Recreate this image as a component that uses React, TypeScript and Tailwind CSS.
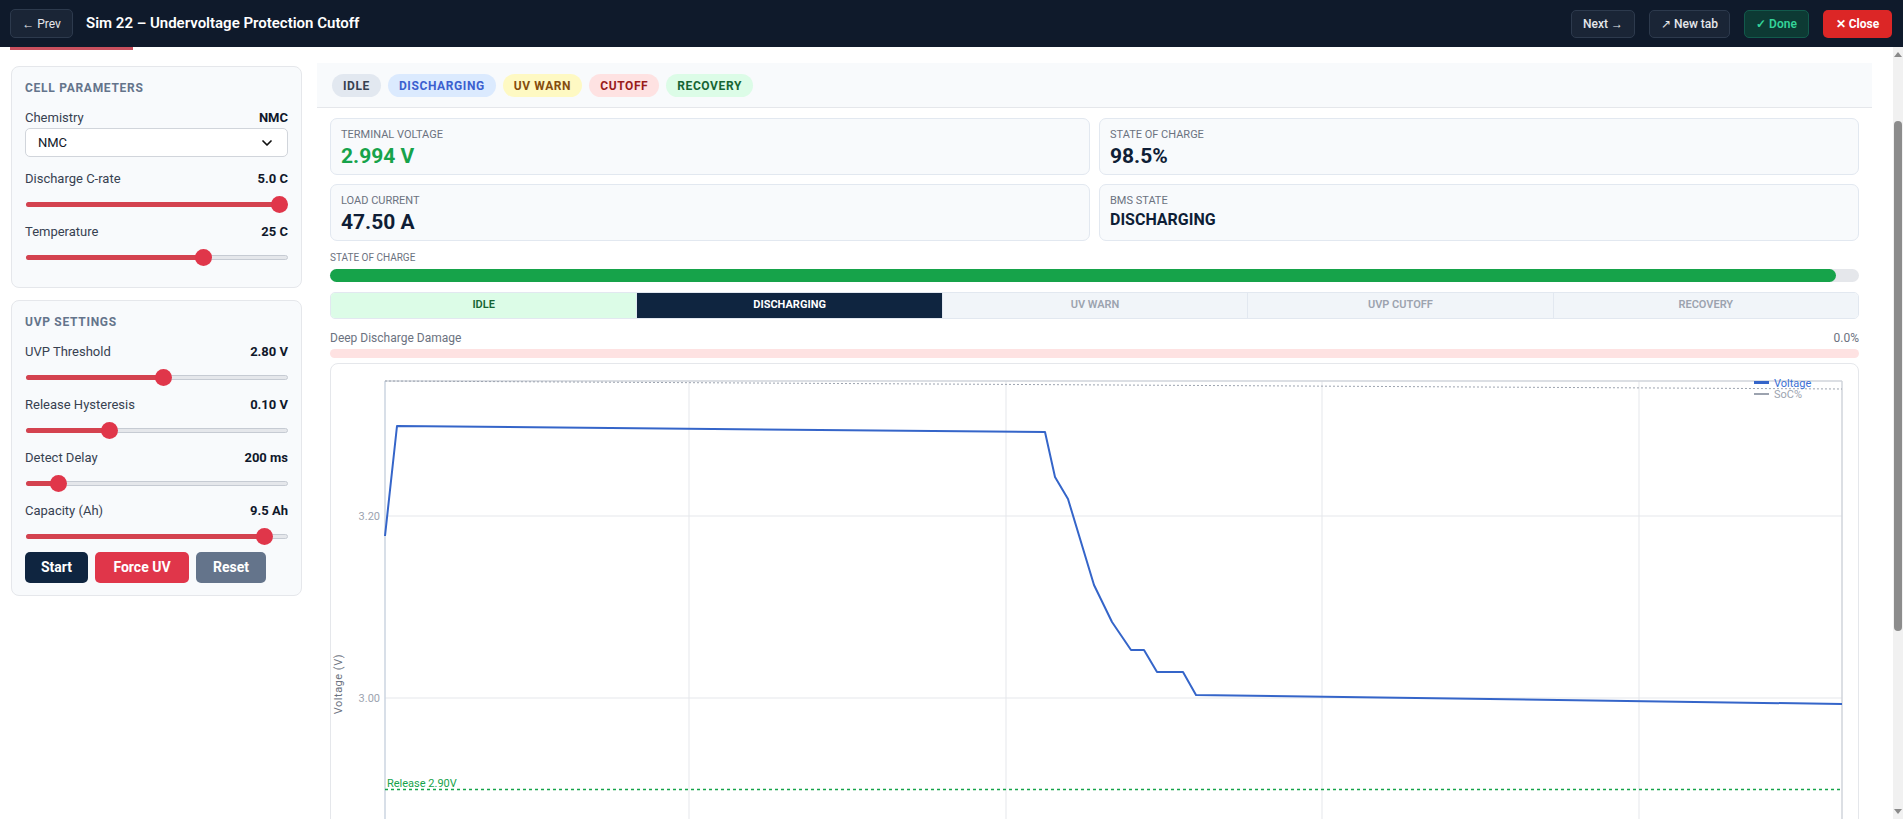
import { ChevronDown } from "lucide-react";

// slider positions are fractions of the track
const cellFields = [
  { label: "Discharge C-rate", value: "5.0 C", pos: 1 },
  { label: "Temperature", value: "25 C", pos: 0.69 },
];

const uvpFields = [
  { label: "UVP Threshold", value: "2.80 V", pos: 0.53 },
  { label: "Release Hysteresis", value: "0.10 V", pos: 0.307 },
  { label: "Detect Delay", value: "200 ms", pos: 0.1 },
  { label: "Capacity (Ah)", value: "9.5 Ah", pos: 0.941 },
];

const pills = [
  { name: "IDLE", cls: "bg-[#e2e8f0] text-[#374151]" },
  { name: "DISCHARGING", cls: "bg-[#dbeafe] text-[#3b5fcf]" },
  { name: "UV WARN", cls: "bg-[#fef9c3] text-[#854d0e]" },
  { name: "CUTOFF", cls: "bg-[#fee2e2] text-[#991b1b]" },
  { name: "RECOVERY", cls: "bg-[#dcfce7] text-[#166534]" },
];

const stateTabs = [
  { name: "IDLE", cls: "bg-[#dcfce7] text-[#166534] font-semibold" },
  { name: "DISCHARGING", cls: "bg-[#0f2540] text-white font-bold" },
  { name: "UV WARN", cls: "bg-[#f1f5f9] text-[#9ca3af] font-semibold" },
  { name: "UVP CUTOFF", cls: "bg-[#f1f5f9] text-[#9ca3af] font-semibold" },
  { name: "RECOVERY", cls: "bg-[#f1f5f9] text-[#9ca3af] font-semibold" },
];

const voltagePts = [
  [54, 172], [66, 62], [489, 66], [714, 68], [724, 113], [737, 135], [763, 221],
  [781, 258], [800, 286], [813, 286], [826, 308], [852, 308], [865, 331], [1511, 340],
];

function Slider({ pos }: { pos: number }) {
  return (
    <div className="relative h-[17px] mt-[7px]">
      <div className="absolute left-[1px] right-0 top-[6px] h-[5px] rounded-full bg-[#e5e7eb] border border-[#c6cbd3]" />
      <div
        className="absolute left-[1px] top-[6px] h-[5px] rounded-full bg-[#d4424f]"
        style={{ width: `calc(${pos} * (100% - 17px) + 8px)` }}
      />
      <div
        className="absolute top-0 h-[17px] w-[17px] rounded-full bg-[#e0364a]"
        style={{ left: `calc(${pos} * (100% - 17px))` }}
      />
    </div>
  );
}

function FieldRow({ label, value }: { label: string; value: string }) {
  return (
    <div className="flex h-[20px] items-center justify-between text-[13px]">
      <span className="text-[#374151]">{label}</span>
      <span className="font-bold text-[#0f172a]">{value}</span>
    </div>
  );
}

function MetricCard({ label, value, valueCls }: { label: string; value: string; valueCls: string }) {
  return (
    <div className="h-[57px] rounded-[7px] border border-[#e2e8f0] bg-[#f8fafc] pl-[10px] pt-[8px]">
      <div className="text-[11px] leading-[16px] text-[#6b7280] uppercase">{label}</div>
      <div className={valueCls}>{value}</div>
    </div>
  );
}

function Chart() {
  const pts = voltagePts.map((p) => p.join(",")).join(" ");
  return (
    <svg width="1527" height="700" className="block">
      {/* grid */}
      {[358, 675, 991, 1308].map((x) => (
        <line key={x} x1={x} y1={17} x2={x} y2={623} stroke="#e5e7eb" strokeWidth="1" />
      ))}
      {[152, 334, 516].map((y) => (
        <line key={y} x1={54} y1={y} x2={1511} y2={y} stroke="#e5e7eb" strokeWidth="1" />
      ))}
      {/* frame */}
      <line x1={54} y1={17} x2={1511} y2={17} stroke="#d1d5db" strokeWidth="1.5" />
      <line x1={54} y1={17} x2={54} y2={623} stroke="#cbd5e1" strokeWidth="1.5" />
      <line x1={1511} y1={17} x2={1511} y2={623} stroke="#d1d5db" strokeWidth="1.5" />

      {/* ticks */}
      <g fontSize="11" fill="#9ca3af" textAnchor="end">
        <text x={49} y={156}>3.20</text>
        <text x={49} y={338}>3.00</text>
      </g>
      <text
        x={0}
        y={0}
        fontSize="11"
        fill="#6b7280"
        textAnchor="middle"
        letterSpacing="0.5"
        transform="translate(11 320) rotate(-90)"
      >
        Voltage (V)
      </text>

      {/* thresholds */}
      <line x1={54} y1={425.5} x2={1511} y2={425.5} stroke="#16a34a" strokeWidth="1.5" strokeDasharray="3 3" />
      <text x={56} y={423} fontSize="11" fill="#16a34a">Release 2.90V</text>
      <line x1={54} y1={516} x2={1511} y2={516} stroke="#dc2626" strokeWidth="1.5" strokeDasharray="5 4" />

      {/* SoC */}
      <line x1={54} y1={17} x2={1511} y2={25} stroke="#9ca3af" strokeWidth="1" strokeDasharray="2 2" />

      {/* voltage */}
      <polyline points={pts} fill="none" stroke="#3565c9" strokeWidth="2" strokeLinejoin="round" />

      {/* legend */}
      <rect x={1423} y={17} width={15} height={3} fill="#3565c9" />
      <text x={1443} y={23} fontSize="11" fill="#3b6fd4">Voltage</text>
      <rect x={1423} y={29} width={15} height={2} fill="#9ca3af" />
      <text x={1443} y={34} fontSize="11" fill="#9ca3af">SoC%</text>
    </svg>
  );
}

export default function App() {
  return (
    <div className="h-screen w-full overflow-hidden flex flex-col bg-white font-['Segoe_UI',Roboto,'Noto_Sans',sans-serif]">
      {/* Top bar */}
      <header className="h-[47px] shrink-0 bg-[#0f1a2b] flex items-center justify-between pl-[10px] pr-[11px]">
        <div className="flex items-center gap-[13px]">
          <button className="h-[29px] w-[63px] rounded-[5px] border border-[#2d3a4d] bg-[#1a2536] text-[12px] text-[#e5e7eb]">
            ← Prev
          </button>
          <h1 className="text-[15px] font-semibold text-white">Sim 22 – Undervoltage Protection Cutoff</h1>
        </div>
        <div className="flex items-center gap-[14px]">
          <button className="h-[28px] w-[64px] rounded-[5px] border border-[#2d3a4d] bg-[#1a2536] text-[12px] font-medium text-[#e5e7eb]">
            Next →
          </button>
          <button className="h-[28px] w-[81px] rounded-[5px] border border-[#2d3a4d] bg-[#1a2536] text-[12px] font-medium text-[#e5e7eb]">
            ↗ New tab
          </button>
          <button className="h-[28px] w-[65px] rounded-[5px] border border-[#125a4c] bg-[#0d3a34] text-[12px] font-semibold text-[#34d399]">
            ✓ Done
          </button>
          <button className="h-[28px] w-[69px] rounded-[5px] bg-[#dc2626] text-[12px] font-bold text-white">
            ✕ Close
          </button>
        </div>
      </header>

      <div className="flex-1 flex min-h-0">
        <div className="flex-1 min-w-0 overflow-hidden">
          <div className="h-[3px] w-[123px] ml-[10px] bg-[#c9505e]" />

          <div className="flex items-start pt-[13px] pl-[11px]">
            {/* Sidebar */}
            <aside className="w-[291px] shrink-0 mt-[3px] flex flex-col gap-[12px]">
              <section className="rounded-[8px] border border-[#e5e7eb] bg-[#f8fafc] px-[13px] pt-[12px] pb-[12px]">
                <h3 className="h-[18px] mb-[11px] text-[12px] leading-[18px] font-bold tracking-[0.06em] text-[#64748b] uppercase">
                  Cell Parameters
                </h3>
                <FieldRow label="Chemistry" value="NMC" />
                <div className="h-[29px] mb-[12px] flex items-center justify-between rounded-[5px] border border-[#d1d5db] bg-white px-[12px] text-[13px] text-[#111827]">
                  <span>NMC</span>
                  <ChevronDown size={16} strokeWidth={2.6} className="text-[#111]" />
                </div>
                {cellFields.map((f) => (
                  <div key={f.label} className="mb-[9px]">
                    <FieldRow label={f.label} value={f.value} />
                    <Slider pos={f.pos} />
                  </div>
                ))}
              </section>

              <section className="rounded-[8px] border border-[#e5e7eb] bg-[#f8fafc] px-[13px] pt-[12px] pb-[12px]">
                <h3 className="h-[18px] mb-[11px] text-[12px] leading-[18px] font-bold tracking-[0.06em] text-[#64748b] uppercase">
                  UVP Settings
                </h3>
                {uvpFields.map((f, i) => (
                  <div key={f.label} className={i === uvpFields.length - 1 ? "mb-[7px]" : "mb-[9px]"}>
                    <FieldRow label={f.label} value={f.value} />
                    <Slider pos={f.pos} />
                  </div>
                ))}
                <div className="flex gap-[7px]">
                  <button className="h-[31px] w-[63px] rounded-[5px] bg-[#0f2540] text-[14px] font-bold text-white">Start</button>
                  <button className="h-[31px] w-[94px] rounded-[5px] bg-[#e0364a] text-[14px] font-bold text-white">Force UV</button>
                  <button className="h-[31px] w-[70px] rounded-[5px] bg-[#64748b] text-[14px] font-bold text-white">Reset</button>
                </div>
              </section>
            </aside>

            {/* Main panel */}
            <main className="ml-[15px] w-[1555px] shrink-0">
              <div className="h-[45px] flex items-center gap-[7px] px-[15px] bg-[#f8fafc] border-b border-[#e5e7eb]">
                {pills.map((p) => (
                  <span key={p.name} className={`mt-[1px] h-[23px] px-[11px] flex items-center rounded-full text-[12px] font-bold tracking-[0.05em] ${p.cls}`}>
                    {p.name}
                  </span>
                ))}
              </div>

              <div className="px-[13px] pt-[10px]">
                <div className="grid grid-cols-2 gap-[9px]">
                  <MetricCard label="Terminal Voltage" value="2.994 V" valueCls="text-[21px] leading-[26px] font-bold text-[#16a34a]" />
                  <MetricCard label="State of Charge" value="98.5%" valueCls="text-[21px] leading-[26px] font-bold text-[#0f1e36]" />
                  <MetricCard label="Load Current" value="47.50 A" valueCls="text-[21px] leading-[26px] font-bold text-[#0f1e36]" />
                  <MetricCard label="BMS State" value="DISCHARGING" valueCls="mt-[2px] text-[16px] leading-[18px] font-bold text-[#0f1e36]" />
                </div>

                <div className="mt-[10px] text-[10px] leading-[14px] text-[#6b7280] uppercase">State of Charge</div>
                <div className="mt-[4px] h-[13px] rounded-full bg-[#e5e7eb]">
                  <div className="h-full rounded-full bg-[#16a34a]" style={{ width: "98.5%" }} />
                </div>

                <div className="mt-[10px] h-[27px] grid grid-cols-5 rounded-[5px] border border-[#e2e8f0] overflow-hidden">
                  {stateTabs.map((t, i) => (
                    <div
                      key={t.name}
                      className={`flex items-center justify-center text-[11px] ${i > 0 ? "border-l border-[#e2e8f0]" : ""} ${t.cls}`}
                    >
                      {t.name}
                    </div>
                  ))}
                </div>

                <div className="mt-[11px] flex justify-between text-[12px] leading-[16px] text-[#6b7280]">
                  <span>Deep Discharge Damage</span>
                  <span>0.0%</span>
                </div>
                <div className="mt-[3px] h-[9px] rounded-full bg-[#fee2e2]" />

                <div className="mt-[5px] h-[700px] rounded-[8px] border border-[#e5e7eb] bg-white overflow-hidden">
                  <Chart />
                </div>
              </div>
            </main>
          </div>
        </div>

        {/* scrollbar */}
        <div className="w-[10px] shrink-0 bg-[#f1f1f1] flex flex-col items-center">
          <div className="mt-[5px] h-0 w-0 border-x-[4px] border-x-transparent border-b-[5px] border-b-[#8a8a8a]" />
          <div className="mt-[64px] h-[510px] w-[8px] rounded-[4px] bg-[#8c8c8c]" />
          <div className="flex-1" />
          <div className="mb-[5px] h-0 w-0 border-x-[4px] border-x-transparent border-t-[5px] border-t-[#8a8a8a]" />
        </div>
      </div>
    </div>
  );
}
